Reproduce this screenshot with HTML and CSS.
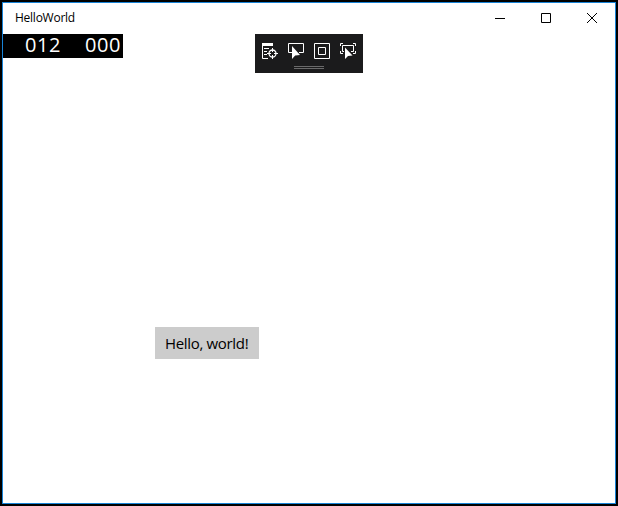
FILE: index.html
```
<!DOCTYPE html>
<html lang="en">
<head>
<meta charset="utf-8">
<title>HelloWorld</title>
<link rel="stylesheet" href="styles.css">
</head>
<body>
<main class="window">
  <header class="titlebar">
    <span class="title">HelloWorld</span>
    <nav class="controls">
      <svg class="control" viewBox="0 0 46 31"><path d="M18 15.500h10"/></svg>
      <svg class="control" viewBox="0 0 46 31"><path d="M18.500 10.500h9v9h-9z"/></svg>
      <svg class="control close" viewBox="0 0 46 31"><path d="M18 10l10 10M28 10l-10 10"/></svg>
    </nav>
  </header>
  <section class="content">
    <div class="counter"><span>012</span><span>000</span></div>
    <div class="toolbar">
      <div class="tools">
        <svg class="tool" viewBox="0 0 18 18"><path class="fill" d="M1 1h11v3H1z"/><path d="M1.500 3v13.500H7M3 6.500h5M3 9.500h3M3 12.500h3"/><circle cx="11.500" cy="11.500" r="3.500" stroke-width="1.300"/><path d="M11.500 6v4M11.500 13v4M6 11.500h4M13 11.500h4"/></svg>
        <svg class="tool" viewBox="0 0 18 18"><path d="M5 10.500H1.500v-9h15v9H12"/><path class="fill" d="M5 4v13l3.200-3.500 4.800-.5z"/></svg>
        <svg class="tool" viewBox="0 0 18 18"><path d="M1.500 1.500h15v15h-15zM5.500 5.500h7v7h-7z"/></svg>
        <svg class="tool" viewBox="0 0 18 18"><path d="M1.500 4V1.500H4M14 1.500h2.500V4M1.500 9v2.500H4M14 11.500h2.500V9M5 9.500H3.500v-6h11v6H12"/><path class="fill" d="M6 5.500v11.500l3-3 4.500-.5z"/></svg>
      </div>
      <div class="grip"></div>
    </div>
    <button class="hello"><span>Hello, world!</span></button>
  </section>
</main>
</body>
</html>
```
FILE: styles.css
```
* { box-sizing: border-box; }
body {
  margin: 0;
  padding: 2px;
  height: 506px;
  background: #000;
  font-family: "Open Sans", "Noto Sans", sans-serif;
}
.window {
  width: 614px;
  height: 502px;
  border: 1px solid #1883d7;
  background: #fff;
}
.titlebar {
  display: flex;
  justify-content: space-between;
  height: 31px;
  padding-left: 12px;
}
.title {
  font-size: 12px;
  line-height: 30px;
  letter-spacing: -0.25px;
  color: #000;
}
.controls { display: flex; }
.control { width: 46px; height: 31px; fill: none; stroke: #000; stroke-width: 1; }
.content {
  display: grid;
  grid-template-columns: 120px 132px 108px;
  grid-template-rows: 39px auto;
  align-items: start;
}
.counter {
  display: flex;
  gap: 24px;
  width: 120px;
  height: 24px;
  padding-left: 22px;
  background: #000;
  color: #fff;
  font-size: 20px;
  font-weight: 500;
  line-height: 22px;
  letter-spacing: 0.56px;
}
.toolbar {
  grid-column: 3;
  height: 39px;
  padding: 8px 6px 0;
  background: #1b1b1c;
}
.tools { display: flex; gap: 8px; }
.tool { width: 18px; height: 18px; fill: none; stroke: #fff; stroke-width: 1; }
.tool .fill { fill: #fff; stroke: none; }
.grip {
  width: 30px;
  height: 3px;
  margin: 6px auto 0;
  border-top: 1px solid #6a6a6a;
  border-bottom: 1px solid #6a6a6a;
}
.hello {
  grid-column: 1 / 4;
  width: 104px;
  height: 32px;
  margin: 254px 0 0 152px;
  padding: 0 0 0 10px;
  border: 0;
  background: #ccc;
  color: #000;
  font: 15px/32px "Open Sans", "Noto Sans", sans-serif;
  letter-spacing: -0.33px;
  text-align: left;
}
```
